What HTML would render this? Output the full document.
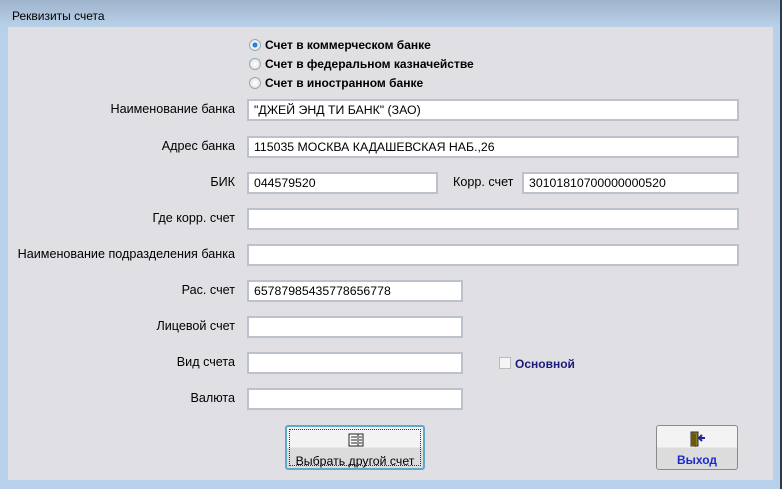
<!DOCTYPE html>
<html><head><meta charset="utf-8"><style>
*{margin:0;padding:0;box-sizing:border-box}
body{width:782px;height:489px;overflow:hidden;background:#b8d0ea;font-family:"Liberation Sans",Arial,sans-serif;font-size:12px;color:#000;position:relative}
.title{position:absolute;left:0;top:0;width:782px;height:27px;background:linear-gradient(#9fb4cc,#b9d1ea)}
.title span{position:absolute;left:12px;top:9px;font-size:12px}
.client{position:absolute;left:8px;top:27px;width:765px;height:453px;background:#e0dfe3}
.edge{position:absolute;left:780px;top:0;width:2px;height:489px;background:#2a3a50}
.in{position:absolute;height:22px;background:#fff;border:2px solid #bcc2cc;padding:2px 5px;line-height:15px;font-size:12.3px}
.lb{position:absolute;right:547px;text-align:right;white-space:nowrap;font-size:12.6px}
.r{position:absolute;left:249px;font-weight:bold;white-space:nowrap}
.r i{display:inline-block;width:12px;height:12px;border-radius:50%;border:1px solid #9aa;background:radial-gradient(#fff,#ddd);vertical-align:-2px;margin-right:4px}
.r i.on{background:radial-gradient(#2a7fcf 30%,#e8f0f8 40%)}
.btn{position:absolute;top:425px;height:45px;border:1px solid #8a8a8a;border-radius:3px;background:linear-gradient(#f3f3f3 50%,#dcdcdc 50%);text-align:center}
</style></head><body>
<div class="title"><span>Реквизиты счета</span></div>
<div class="client"></div>
<div class="edge"></div>
<div class="r" style="top:38px"><i class="on"></i>Счет в коммерческом банке</div>
<div class="r" style="top:57px"><i></i>Счет в федеральном казначействе</div>
<div class="r" style="top:76px"><i></i>Счет в иностранном банке</div>

<div class="lb" style="top:102px">Наименование банка</div>
<div class="in" style="left:247px;top:99px;width:492px">"ДЖЕЙ ЭНД ТИ БАНК" (ЗАО)</div>
<div class="lb" style="top:139px">Адрес банка</div>
<div class="in" style="left:247px;top:136px;width:492px">115035 МОСКВА КАДАШЕВСКАЯ НАБ.,26</div>
<div class="lb" style="top:175px">БИК</div>
<div class="in" style="left:247px;top:172px;width:191px">044579520</div>
<div style="position:absolute;left:453px;top:175px;font-size:12.6px">Корр. счет</div>
<div class="in" style="left:522px;top:172px;width:217px">30101810700000000520</div>
<div class="lb" style="top:211px">Где корр. счет</div>
<div class="in" style="left:247px;top:208px;width:492px"></div>
<div class="lb" style="top:247px">Наименование подразделения банка</div>
<div class="in" style="left:247px;top:244px;width:492px"></div>
<div class="lb" style="top:283px">Рас. счет</div>
<div class="in" style="left:247px;top:280px;width:216px">65787985435778656778</div>
<div class="lb" style="top:319px">Лицевой счет</div>
<div class="in" style="left:247px;top:316px;width:216px"></div>
<div class="lb" style="top:355px">Вид счета</div>
<div class="in" style="left:247px;top:352px;width:216px"></div>
<div style="position:absolute;left:499px;top:357px;width:12px;height:12px;border:1px solid #bbb;background:#f4f4f4"></div>
<div style="position:absolute;left:515px;top:357px;font-weight:bold;color:#1a1a7a">Основной</div>
<div class="lb" style="top:391px">Валюта</div>
<div class="in" style="left:247px;top:388px;width:216px"></div>

<div class="btn" style="left:285px;width:140px;border:2px solid #5fa8c8">
<div style="position:absolute;inset:2px;border:1px dotted #333"></div>
<svg width="16" height="14" style="position:absolute;left:61px;top:6px"><rect x="1" y="1" width="14" height="12" fill="#fff" stroke="#222"/><path d="M3 4h6M3 7h6M3 10h6M10 1v12M11 4h3M11 7h3M11 10h3" stroke="#222"/></svg>
<div style="position:absolute;left:0;right:0;top:27px;font-size:12.3px">Выбрать другой счет</div></div>
<div class="btn" style="left:656px;width:82px">
<svg width="18" height="16" style="position:absolute;left:32px;top:5px"><rect x="2" y="1" width="7" height="14" fill="#8a7a20" stroke="#333"/><path d="M2 1l5 2v13l-5-1z" fill="#6a5a10"/><path d="M10 7h6M13 4l-3 3 3 3" stroke="#1a2a9a" stroke-width="2" fill="none"/></svg>
<div style="position:absolute;left:0;right:0;top:27px;font-weight:bold;color:#1a2ad0">Выход</div></div>
</body></html>
